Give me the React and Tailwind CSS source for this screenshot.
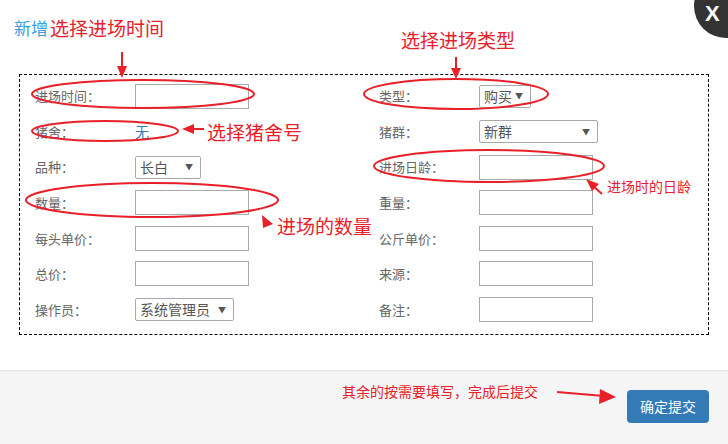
import React from 'react';

const RED = '#e8202a';

function Input({ w = 'w-[114px]' }) {
    return <div className={`${w} h-[25px] border border-[#a9a9a9] bg-white`} />;
}

function Select({ text, w }) {
    return (
        <div className={`${w} h-[23px] border border-[#a9a9a9] rounded-[2px] bg-white flex items-center justify-between pl-[4px] pr-[7px] text-[14px] text-[#555]`}>
            <span>{text}</span>
            <span className="text-[8px] text-[#555]">▼</span>
        </div>
    );
}

function Field({ label, children }) {
    return (
        <div className="flex items-center h-[24px]">
            <div className="w-[100px] text-[13px] text-[#666]">{label}</div>
            {children}
        </div>
    );
}

const ROWS = [
    [['进场时间：', <Input />], ['类型：', <Select text="购买" w="w-[52px]" />]],
    [['猪舍：', <span className="text-[14px] text-[#337ab7]">无</span>], ['猪群：', <Select text="新群" w="w-[119px]" />]],
    [['品种：', <Select text="长白" w="w-[66px]" />], ['进场日龄：', <Input />]],
    [['数量：', <Input />], ['重量：', <Input />]],
    [['每头单价：', <Input />], ['公斤单价：', <Input />]],
    [['总价：', <Input />], ['来源：', <Input />]],
    [['操作员：', <Select text="系统管理员" w="w-[99px]" />], ['备注：', <Input />]],
];

function Notes() {
    return (
        <svg className="absolute inset-0 pointer-events-none" width="728" height="444">
            <g fill="none" stroke={RED} strokeWidth="2">
                <ellipse cx="143" cy="94" rx="111" ry="14" />
                <ellipse cx="456" cy="94" rx="92" ry="15" />
                <ellipse cx="105" cy="131" rx="73" ry="10" />
                <ellipse cx="489" cy="166" rx="115" ry="16" />
                <ellipse cx="152" cy="200" rx="126" ry="17" />
                <line x1="122" y1="52" x2="122" y2="68" />
                <line x1="456" y1="57" x2="456" y2="70" />
                <line x1="190" y1="129" x2="204" y2="129" />
                <line x1="592" y1="185" x2="602" y2="194" />
                <line x1="557" y1="392" x2="604" y2="396" />
            </g>
            <g fill={RED}>
                <polygon points="117,66 127,66 122,78" />
                <polygon points="451,68 461,68 456,79" />
                <polygon points="182,129 194,124 194,134" />
                <polygon points="586,179 599,184 592,191" />
                <polygon points="262,215 273,224 263,228" />
                <polygon points="616,397 600,389 599,404" />
            </g>
        </svg>
    );
}

export default function App() {
    return (
        <div className="relative w-[728px] h-[444px] bg-white overflow-hidden font-['Noto_Sans_CJK_SC',sans-serif] flex flex-col">
            {/* close */}
            <div className="absolute left-[694px] top-[-26px] w-[64px] h-[64px] rounded-full bg-[#333]" />
            <span className="absolute left-[705px] top-[3px] text-white font-bold text-[22px] leading-[22px] font-['Liberation_Sans',sans-serif]">X</span>

            <div className="h-[74px] flex items-start pt-[16px] pl-[14px]">
                <span className="text-[17px] text-[#3c9ce0] leading-[24px]">新增</span>
            </div>

            <div className="mx-[19px] w-[690px] h-[261px] border border-dashed border-black px-[15px] pt-[9px] flex flex-col gap-y-[11.6px]">
                {ROWS.map((row, i) => (
                    <div key={i} className="grid grid-cols-[344px_1fr]">
                        {row.map(([label, ctrl], j) => (
                            <Field key={j} label={label}>{ctrl}</Field>
                        ))}
                    </div>
                ))}
            </div>

            <div className="mt-[35px] flex-1 bg-[#f5f5f5] border-t border-[#e5e5e5] flex justify-end items-start pt-[19px] pr-[19px]">
                <button className="w-[82px] h-[33px] bg-[#337ab7] text-white text-[14px] rounded-[4px]">确定提交</button>
            </div>

            <Notes />
            <div className="absolute left-[50px] top-[16px] text-[19px] leading-[24px] text-[#e8202a]">选择进场时间</div>
            <div className="absolute left-[401px] top-[28px] text-[19px] leading-[24px] text-[#e8202a]">选择进场类型</div>
            <div className="absolute left-[207px] top-[120px] text-[19px] leading-[24px] text-[#e8202a]">选择猪舍号</div>
            <div className="absolute left-[277px] top-[214px] text-[19px] leading-[24px] text-[#e8202a]">进场的数量</div>
            <div className="absolute left-[607px] top-[176px] text-[14px] leading-[20px] text-[#e8202a]">进场时的日龄</div>
            <div className="absolute left-[342px] top-[381px] text-[14px] leading-[20px] text-[#e8202a]">其余的按需要填写，完成后提交</div>
        </div>
    );
}
